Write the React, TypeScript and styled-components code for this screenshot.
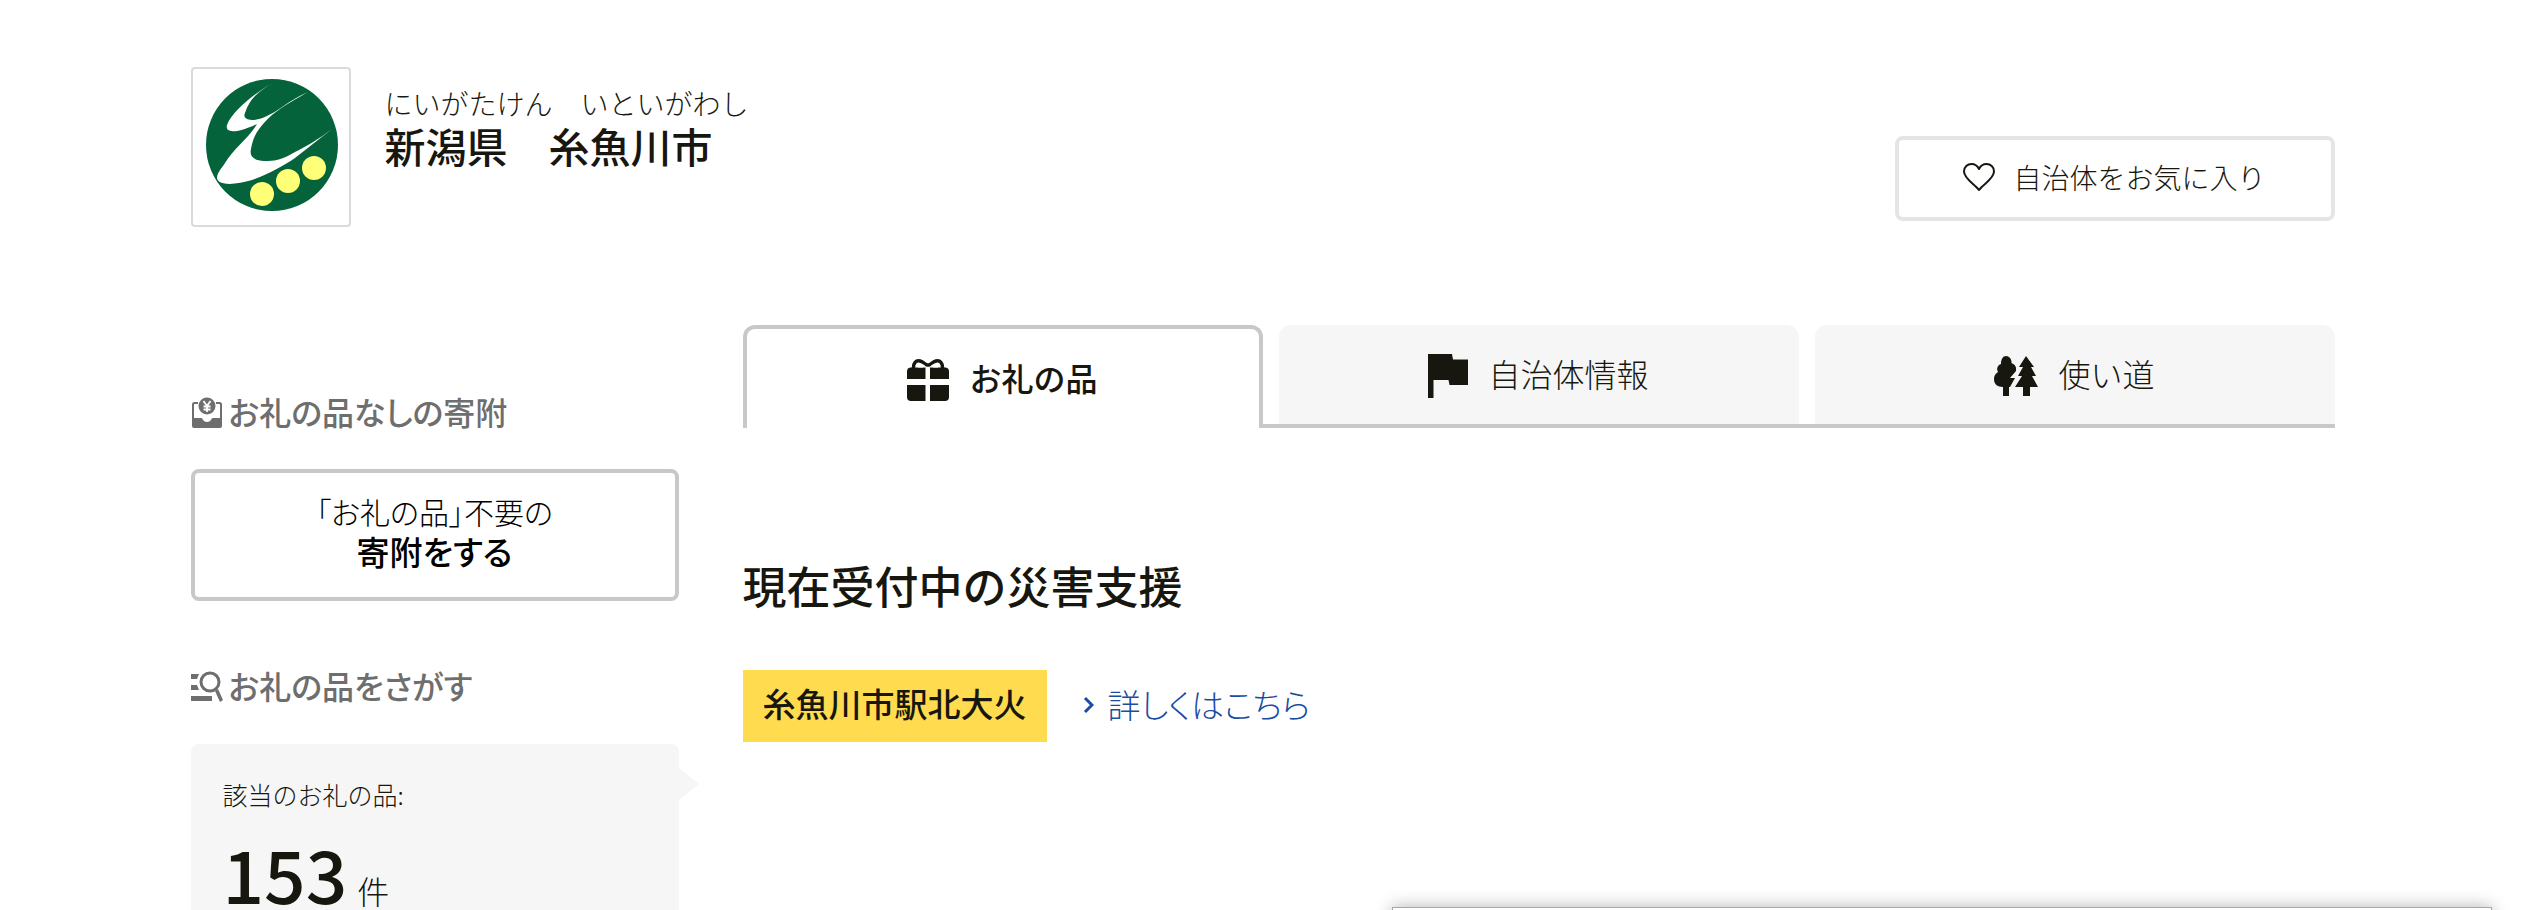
import React from 'react';
import styled, { createGlobalStyle, css } from 'styled-components';

const ink = '#17170f';
const line = '#c8c8c8';
const pale = '#f6f6f6';

const GlobalStyle = createGlobalStyle`
  *, *::before, *::after { box-sizing: border-box; }
  html { height: 100%; }
  body {
    margin: 0;
    height: 100%;
    overflow: hidden;
    background: #fff;
    color: ${ink};
    font-family: "Noto Sans CJK JP", "Noto Sans", sans-serif;
    font-weight: 300;
  }
  h1, h2, p { margin: 0; font-weight: 500; }
  button { font: inherit; color: inherit; cursor: pointer; }
  a { text-decoration: none; color: inherit; }
`;

const proportional = css`
  font-feature-settings: "palt";
`;

const Page = styled.div`
  width: 90%;
  max-width: 2144px;
  margin: 0 auto;
`;

const Header = styled.header`
  display: flex;
  align-items: flex-start;
  padding-top: 67px;
`;

const Emblem = styled.div`
  flex: none;
  width: 160px;
  height: 160px;
  border: 2px solid #dadada;
  border-radius: 4px;
  svg { display: block; width: 100%; height: 100%; }
`;

const CityName = styled.div`
  flex: 1;
  margin-left: 34px;
  padding-top: 16px;
`;

const Furigana = styled.p`
  font-size: 28px;
  line-height: 40px;
  font-weight: 300;
`;

const Name = styled.h1`
  font-size: 41px;
  line-height: 44px;
`;

const FavoriteButton = styled.button`
  display: flex;
  align-items: center;
  justify-content: center;
  gap: 18px;
  width: 440px;
  height: 85px;
  margin-top: 69px;
  padding: 0 0 4px;
  background: #fff;
  border: 4px solid #e5e5e5;
  border-radius: 8px;
  font-size: 28px;
`;

const Columns = styled.div`
  display: grid;
  grid-template-columns: 488px minmax(0, 1fr);
  column-gap: 64px;
  margin-top: 98px;
`;

const Sidebar = styled.aside`
  padding-top: 64px;
`;

const SideHeading = styled.h2`
  ${proportional}
  display: flex;
  align-items: center;
  gap: 6px;
  font-size: 32px;
  line-height: 44px;
  color: #6e6e6e;
  svg { flex: none; margin-top: 4px; }
`;

const DonateButton = styled.button`
  ${proportional}
  display: block;
  width: 100%;
  height: 132px;
  margin: 36px 0 62px;
  padding: 0 0 8px;
  border: 4px solid ${line};
  border-radius: 8px;
  background: #fff;
  color: #000;
  font-size: 30px;
  line-height: 40px;
  strong {
    display: block;
    font-size: 33px;
    font-weight: 500;
  }
`;

const ResultBox = styled.section`
  position: relative;
  margin-top: 37px;
  padding: 32px 32px 48px;
  border-radius: 8px;
  background: ${pale};
  &::after {
    content: "";
    position: absolute;
    left: 100%;
    top: 24px;
    border: solid transparent;
    border-width: 16px 0 16px 20px;
    border-left-color: ${pale};
  }
`;

const ResultLabel = styled.p`
  font-size: 25px;
  line-height: 36px;
  font-weight: 300;
`;

const ResultCount = styled.p`
  display: flex;
  align-items: baseline;
  gap: 10px;
  margin-top: 16px;
  font-size: 32px;
  line-height: 88px;
  font-weight: 300;
  strong { font-size: 73px; font-weight: 500; }
`;

const Tabs = styled.nav`
  display: grid;
  grid-template-columns: repeat(3, minmax(0, 1fr));
  column-gap: 16px;
  height: 103px;
  background: linear-gradient(${line}, ${line}) bottom / 100% 4px no-repeat;
`;

const Tab = styled.a<{ $active?: boolean }>`
  display: flex;
  align-items: center;
  justify-content: center;
  gap: 20px;
  font-size: 32px;
  line-height: 44px;
  border-radius: 12px 12px 0 0;
  span { padding-bottom: 5px; }
  ${({ $active }) =>
    $active
      ? css`
          border: 4px solid ${line};
          border-bottom: 0;
          padding-top: 2px;
          background: #fff;
          font-weight: 500;
        `
      : css`
          margin-bottom: 4px;
          padding-top: 2px;
          background: ${pale};
        `}
`;

const DisasterHeading = styled.h2`
  margin-top: 125px;
  font-size: 44px;
  line-height: 64px;
`;

const DisasterRow = styled.div`
  display: flex;
  align-items: center;
  gap: 36px;
  margin-top: 53px;
`;

const DisasterName = styled.span`
  padding: 9px 20px 15px;
  background: #ffdb4f;
  font-size: 33px;
  line-height: 48px;
  font-weight: 500;
`;

const MoreLink = styled.a`
  ${proportional}
  display: flex;
  align-items: center;
  gap: 14px;
  padding-bottom: 4px;
  color: #1a4ca3;
  font-size: 33px;
  line-height: 48px;
  svg { margin-top: 2px; }
`;

const Notice = styled.div`
  position: fixed;
  right: 33px;
  bottom: -97px;
  width: 1100px;
  max-width: 90%;
  height: 100px;
  border: 1px solid #a8a8a8;
  background: #fff;
  box-shadow: 0 0 16px rgba(0, 0, 0, 0.3);
`;

const CityEmblem = () => (
  <svg viewBox="0 0 156 156" role="img" aria-label="糸魚川市">
    <circle cx="79" cy="76" r="66" fill="#04633b" />
    <path
      d="M81 13C62 24 39 42 34 56C32 64 42 65 64 55C56 69 40 80 32 94C28 100 24 104 24 109C25 117 43 116 59 111C76 105 90 97 102 89L139 60C126 70 114 77 102 83C92 89 84 92 75 92C62 92 56 89 58 80C59 74 61 68 64 63C68 57 73 51 79 46C91 36 103 30 115 23C106 27 99 31 92 36C82 43 70 51 59 51C53 51 50 48 52 44C54 37 58 31 62 27C67 22 74 17 81 13Z"
      fill="#fff"
    />
    <circle cx="69" cy="125" r="12" fill="#ffff78" />
    <circle cx="95" cy="112" r="12" fill="#ffff78" />
    <circle cx="121" cy="99" r="12" fill="#ffff78" />
  </svg>
);

const HeartIcon = () => (
  <svg width="32" height="28" viewBox="0 0 32 28" fill="none" stroke={ink} strokeWidth="2" strokeLinejoin="round" aria-hidden="true">
    <path d="M16 27C13 22 1 16 1 8.500 1 4 4.500 1 8.500 1c3.500 0 6 2 7.500 5 1.500-3 4-5 7.500-5C27.500 1 31 4 31 8.500 31 16 19 22 16 27Z" />
  </svg>
);

const YenBoxIcon = () => (
  <svg width="32" height="32" viewBox="0 0 32 32" aria-hidden="true">
    <path d="M7 6H3.500Q2 6 2 7.500V22M25 6h3.500Q30 6 30 7.500V22" fill="none" stroke="#6e6e6e" strokeWidth="2" />
    <path d="M1 21h9.500c1 0 1.500 4 5.500 4s4.500-4 5.500-4H31v8q0 2-2 2H3q-2 0-2-2Z" fill="#6e6e6e" />
    <circle cx="16" cy="9" r="8.500" fill="#6e6e6e" />
    <path d="M12.500 4 16 9l3.500-5M16 9v6M12.500 9.500h7M12.500 12.500h7" fill="none" stroke="#fff" strokeWidth="1.800" />
  </svg>
);

const ListSearchIcon = () => (
  <svg width="32" height="32" viewBox="0 0 32 32" fill="#6e6e6e" aria-hidden="true">
    <path d="M0 3h8L6 8H0ZM0 14h6l2 5H0ZM0 25h21v5H0Z" />
    <circle cx="19" cy="11" r="9" fill="none" stroke="#6e6e6e" strokeWidth="3" />
    <path d="m24 20 3-2 5 11-3 2Z" />
  </svg>
);

const GiftIcon = () => (
  <svg width="42" height="42" viewBox="0 0 42 42" fill={ink} aria-hidden="true">
    <path d="M4 8.500h14.500V20H0v-7.500q0-4 4-4ZM23 8.500h15q4 0 4 4V20H23ZM0 26h18.500v16H4q-4 0-4-4ZM23 26h19v12q0 4-4 4H23Z" />
    <path d="M6.500 10C6 4 9 1 13 2c3 1 5 3 7 4h2c2-1 4-3 7-4 4-1 7 2 6.500 8" fill="none" stroke={ink} strokeWidth="3.500" />
    <path d="M11 8.500h5l2-2-4-2q-3 0-3 4ZM31 8.500h-5l-2-2 4-2q3 0 3 4Z" fill="#fff" />
  </svg>
);

const FlagIcon = () => (
  <svg width="40" height="44" viewBox="0 0 40 44" fill={ink} aria-hidden="true">
    <path d="M0 0h24l1 5.500h15V31H21.500l-1-5H5.500v18H0Z" />
  </svg>
);

const TreesIcon = () => (
  <svg width="44" height="40" viewBox="0 0 44 40" fill={ink} aria-hidden="true">
    <path d="M7 8C7 3 9 0 12 0s6 3 5.500 7c4 2 5 4 4.500 8l-6 7h5l-5 9h-1v9H9v-9C2 31 0 27 0 23c0-3 1-5 4-7-2-4 0-7 3-8Z" />
    <path d="m32 0 8 11h-3l5 9h-4l6 11h-8v9h-7v-9h-8l7-11h-4l5-9h-4Z" />
  </svg>
);

const ChevronIcon = () => (
  <svg width="11" height="18" viewBox="0 0 11 18" fill="none" stroke="#1a4ca3" strokeWidth="3" aria-hidden="true">
    <path d="m2 2 7 7-7 7" />
  </svg>
);

export default function App() {
  return (
    <>
      <GlobalStyle />
      <Page>
        <Header>
          <Emblem><CityEmblem /></Emblem>
          <CityName>
            <Furigana>にいがたけん　いといがわし</Furigana>
            <Name>新潟県　糸魚川市</Name>
          </CityName>
          <FavoriteButton type="button"><HeartIcon />自治体をお気に入り</FavoriteButton>
        </Header>
        <Columns>
          <Sidebar>
            <SideHeading><YenBoxIcon />お礼の品なしの寄附</SideHeading>
            <DonateButton type="button">
              「お礼の品」不要の
              <strong>寄附をする</strong>
            </DonateButton>
            <SideHeading><ListSearchIcon />お礼の品をさがす</SideHeading>
            <ResultBox>
              <ResultLabel>該当のお礼の品:</ResultLabel>
              <ResultCount><strong>153</strong>件</ResultCount>
            </ResultBox>
          </Sidebar>
          <main>
            <Tabs>
              <Tab href="#gifts" $active aria-current="page"><GiftIcon /><span>お礼の品</span></Tab>
              <Tab href="#about"><FlagIcon /><span>自治体情報</span></Tab>
              <Tab href="#usage"><TreesIcon /><span>使い道</span></Tab>
            </Tabs>
            <DisasterHeading>現在受付中の災害支援</DisasterHeading>
            <DisasterRow>
              <DisasterName>糸魚川市駅北大火</DisasterName>
              <MoreLink href="#detail"><ChevronIcon />詳しくはこちら</MoreLink>
            </DisasterRow>
          </main>
        </Columns>
      </Page>
      <Notice role="complementary" />
    </>
  );
}
